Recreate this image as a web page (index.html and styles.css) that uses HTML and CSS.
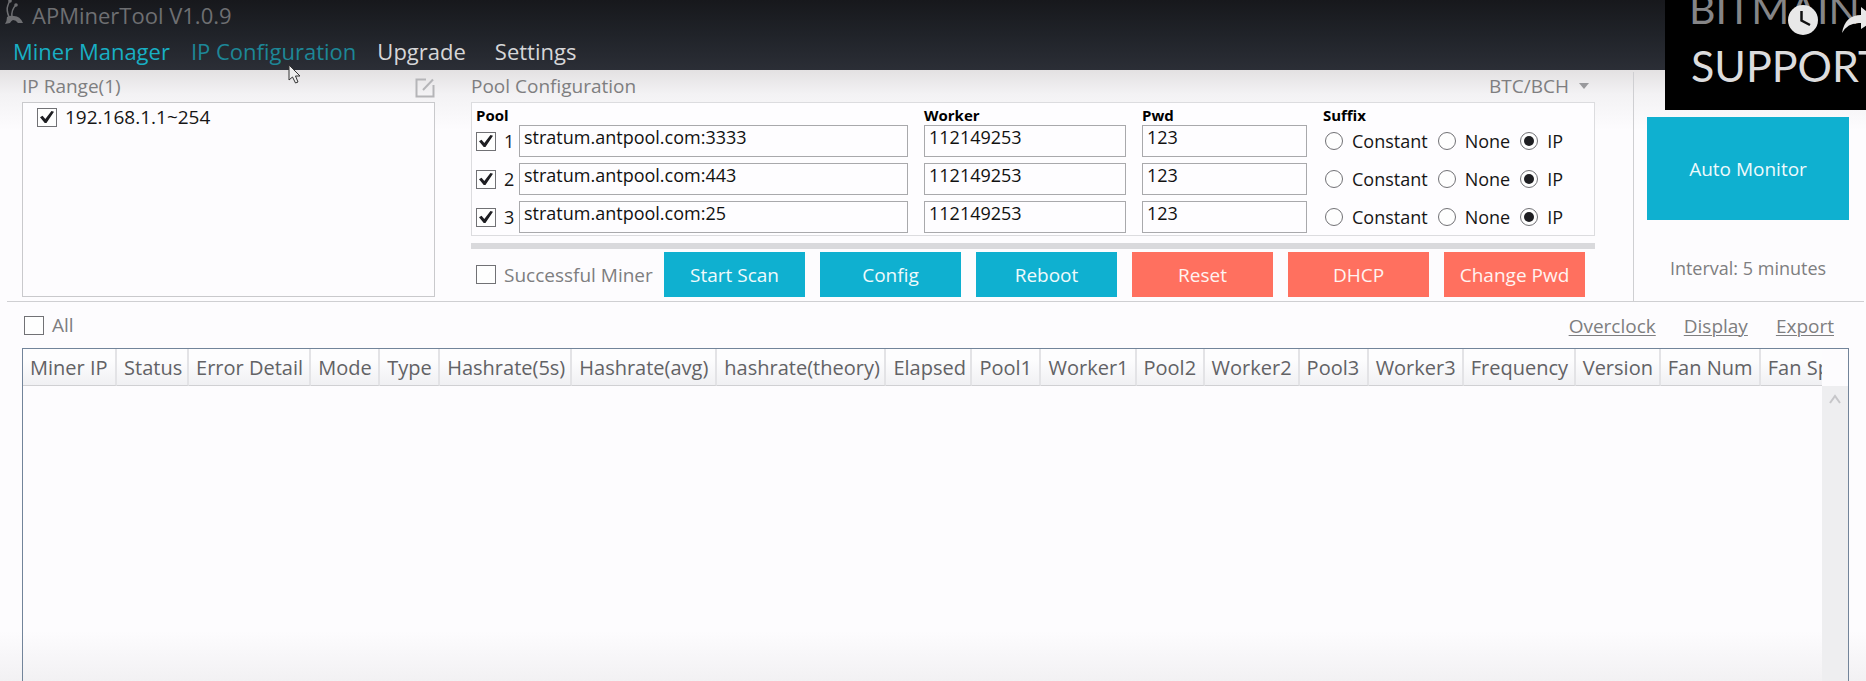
FILE: index.html
```html
<!DOCTYPE html>
<html lang="en">
<head>
<meta charset="utf-8">
<title>APMinerTool V1.0.9</title>
<link rel="stylesheet" href="styles.css">
</head>
<body>
<header class="topbar">
  <div class="brand">
    <svg class="brand-icon" viewBox="0 0 20 24" aria-hidden="true">
      <path d="M0 24Q2 21 2 17Q5 15 9 16Q15 16 18 23H13Q11 20 8 20Q6 21 5 23Z" fill="currentColor"/>
      <path d="M4 17Q1 10 3 5Q4 2 5 1M7 17Q6 10 11 5" fill="none" stroke="currentColor" stroke-width="1.500"/>
      <circle cx="5" cy="1" r="1.800" fill="currentColor"/><circle cx="11" cy="5" r="1.800" fill="currentColor"/>
    </svg>
    <h1 class="brand-name">APMinerTool V1.0.9</h1>
  </div>
  <nav class="nav">
    <a class="nav-link nav-active" href="#miner">Miner Manager</a>
    <a class="nav-link nav-hover" href="#ip">IP Configuration</a>
    <a class="nav-link nav-upgrade" href="#upgrade">Upgrade</a>
    <a class="nav-link" href="#settings">Settings</a>
  </nav>
</header>

<main class="main">
  <div class="config">
    <section class="ip-range">
      <div class="section-head">
        <h2 class="section-title">IP Range(1)</h2>
        <button class="icon-button" type="button" aria-label="Edit IP range">
          <svg width="20" height="20" viewBox="0 0 20 20" fill="none" stroke="#b5b5b8" stroke-width="2" aria-hidden="true">
            <path d="M11 1.500H1.500V18.500H18.500V7"/><path d="M8 12L18 1.500"/>
          </svg>
        </button>
      </div>
      <div class="ip-list">
        <label class="check-label ip-item"><input class="check" type="checkbox" checked> 192.168.1.1~254</label>
      </div>
    </section>

    <section class="pools">
      <div class="section-head">
        <h2 class="section-title">Pool Configuration</h2>
        <select class="coin" aria-label="Coin"><option>BTC/BCH</option></select>
      </div>
      <div class="pool-box">
        <div class="pool-row pool-head">
          <span>Pool</span><span></span><span>Worker</span><span>Pwd</span><span>Suffix</span>
        </div>
        <div class="pool-row">
          <label class="check-label"><input class="check" type="checkbox" checked> 1</label>
          <input class="field" type="text" aria-label="Pool 1 URL" value="stratum.antpool.com:3333">
          <input class="field" type="text" aria-label="Pool 1 worker" value="112149253">
          <input class="field" type="text" aria-label="Pool 1 password" value="123">
          <div class="suffix">
            <label class="radio-label"><input class="radio" type="radio" name="s1">Constant</label>
            <label class="radio-label"><input class="radio" type="radio" name="s1">None</label>
            <label class="radio-label"><input class="radio" type="radio" name="s1" checked>IP</label>
          </div>
        </div>
        <div class="pool-row">
          <label class="check-label"><input class="check" type="checkbox" checked> 2</label>
          <input class="field" type="text" aria-label="Pool 2 URL" value="stratum.antpool.com:443">
          <input class="field" type="text" aria-label="Pool 2 worker" value="112149253">
          <input class="field" type="text" aria-label="Pool 2 password" value="123">
          <div class="suffix">
            <label class="radio-label"><input class="radio" type="radio" name="s2">Constant</label>
            <label class="radio-label"><input class="radio" type="radio" name="s2">None</label>
            <label class="radio-label"><input class="radio" type="radio" name="s2" checked>IP</label>
          </div>
        </div>
        <div class="pool-row">
          <label class="check-label"><input class="check" type="checkbox" checked> 3</label>
          <input class="field" type="text" aria-label="Pool 3 URL" value="stratum.antpool.com:25">
          <input class="field" type="text" aria-label="Pool 3 worker" value="112149253">
          <input class="field" type="text" aria-label="Pool 3 password" value="123">
          <div class="suffix">
            <label class="radio-label"><input class="radio" type="radio" name="s3">Constant</label>
            <label class="radio-label"><input class="radio" type="radio" name="s3">None</label>
            <label class="radio-label"><input class="radio" type="radio" name="s3" checked>IP</label>
          </div>
        </div>
      </div>
      <div class="progress"></div>
      <div class="actions">
        <label class="check-label muted"><input class="check" type="checkbox"> Successful Miner</label>
        <div class="action-buttons">
          <button class="button" type="button">Start Scan</button>
          <button class="button" type="button">Config</button>
          <button class="button" type="button">Reboot</button>
          <button class="button button-danger" type="button">Reset</button>
          <button class="button button-danger" type="button">DHCP</button>
          <button class="button button-danger" type="button">Change Pwd</button>
        </div>
      </div>
    </section>

    <aside class="monitor">
      <button class="button button-monitor" type="button">Auto Monitor</button>
      <p class="interval">Interval: 5 minutes</p>
    </aside>
  </div>

  <div class="toolbar">
    <label class="check-label muted"><input class="check" type="checkbox"> All</label>
    <div class="links">
      <a class="link" href="#overclock">Overclock</a>
      <a class="link" href="#display">Display</a>
      <a class="link" href="#export">Export</a>
    </div>
  </div>

  <div class="grid">
    <div class="grid-view">
      <table class="miners">
        <colgroup>
          <col class="w94"><col class="w72"><col class="w122"><col class="w69"><col class="w60"><col class="w132"><col class="w145"><col class="w169"><col class="w86"><col class="w69"><col class="w95"><col class="w68"><col class="w95"><col class="w69"><col class="w95"><col class="w112"><col class="w85"><col class="w100"><col class="w122">
        </colgroup>
        <thead>
          <tr><th>Miner IP</th><th>Status</th><th>Error Detail</th><th>Mode</th><th>Type</th><th>Hashrate(5s)</th><th>Hashrate(avg)</th><th>hashrate(theory)</th><th>Elapsed</th><th>Pool1</th><th>Worker1</th><th>Pool2</th><th>Worker2</th><th>Pool3</th><th>Worker3</th><th>Frequency</th><th>Version</th><th>Fan Num</th><th>Fan Speed</th></tr>
        </thead>
      </table>
    </div>
    <div class="scrollbar">
      <svg width="14" height="10" viewBox="0 0 14 10" fill="none" stroke="#c6c6c9" stroke-width="2" aria-hidden="true"><path d="M2 9L7 2L12 9"/></svg>
    </div>
  </div>
</main>

<div class="watermark">
  <div class="wm-brand">BITMAIN</div>
  <div class="wm-support">SUPPORT</div>
  <svg class="wm-clock" viewBox="0 0 30 30" aria-hidden="true"><circle cx="15" cy="15" r="15" fill="#e8e8e8"/><path d="M13.500 6V15.500L22 20" fill="none" stroke="#111" stroke-width="2.500"/></svg>
  <svg class="wm-share" viewBox="0 0 34 26" aria-hidden="true"><path d="M0 26Q3 8 19 8V0L34 12L19 22V16Q6 15 0 26Z" fill="#e8e8e8"/></svg>
</div>
<svg class="cursor" viewBox="0 0 14 20" aria-hidden="true"><path d="M1 1V16L4.500 13L7.500 19L10 18L7.500 12H12Z" fill="#eee" stroke="#333" stroke-width="1"/></svg>
</body>
</html>
```
FILE: styles.css
```css
* { box-sizing: border-box; }
body {
  margin: 0;
  min-height: 100vh;
  display: flex;
  flex-direction: column;
  overflow: hidden;
  font: 18px/24px "Open Sans", "Noto Sans", sans-serif;
  color: #161616;
  background: #fdfcfe;
}
button, input, select { font: inherit; color: inherit; }

.topbar {
  height: 70px;
  padding-left: 5px;
  background: linear-gradient(#17181c, #202329 50%, #2b2e36);
}
.brand { display: flex; gap: 7px; height: 32px; color: #6e6f72; }
.brand-icon { width: 20px; height: 24px; }
.brand-name { margin: 0; font-size: 22px; line-height: 30px; font-weight: 400; }
.nav { display: flex; gap: 21px; padding-left: 8px; font-size: 22px; line-height: 38px; height: 38px; align-items: center; }
.nav-link { color: #d6d6d8; text-decoration: none; }
.nav-active { color: #18afc4; }
.nav-hover { color: #1d8797; }
.nav-upgrade { margin-right: 8px; }

.main {
  flex: 1;
  display: flex;
  flex-direction: column;
  background:
    linear-gradient(#e3e1e2, #f3f2f4 24px, #fdfcfe 60px, transparent 61px),
    linear-gradient(to top, #f2f1f3, #fdfcfe 50px);
}
.config {
  display: flex;
  margin: 0 2px 0 7px;
  padding-left: 15px;
  border-bottom: 1px solid #cfcfd2;
}
.section-head { display: flex; justify-content: space-between; align-items: center; height: 32px; }
.section-title { margin: 0; font-size: 19px; font-weight: 400; color: #7e7e80; }

.ip-range { width: 413px; display: flex; flex-direction: column; padding-bottom: 4px; }
.icon-button { border: 0; padding: 0; margin-top: 4px; background: none; height: 20px; width: 20px; line-height: 20px; }
.icon-button svg { display: block; }
.ip-list { flex: 1; border: 1px solid #c9c9cc; background: #fdfcfe; }
.ip-item { padding: 2px 0 0 14px; }

.check-label { display: flex; align-items: center; gap: 8px; white-space: nowrap; }
.check, .radio { appearance: none; margin: 0; flex: none; border: 1px solid #717175; background: #fefefe; }
.check { width: 20px; height: 19px; display: grid; place-items: center; }
.check:checked::before {
  content: "";
  width: 14px;
  height: 12px;
  background: #1e1e22;
  clip-path: polygon(0 52%, 18% 40%, 38% 66%, 82% 0, 100% 6%, 46% 100%, 34% 100%);
}
.radio { width: 18px; height: 18px; border-radius: 50%; display: grid; place-items: center; }
.radio:checked::before { content: ""; width: 10px; height: 10px; border-radius: 50%; background: #1e1e22; }
.ip-item { font-size: 19px; }
.muted { font-size: 19px; color: #7e7e80; }

.pools { flex: 1; margin-left: 36px; }
.coin {
  appearance: none;
  border: 0;
  padding: 0 26px 0 0;
  font-size: 19px;
  color: #7e7e80;
  background: url("data:image/svg+xml,%3Csvg xmlns='http://www.w3.org/2000/svg' width='10' height='6'%3E%3Cpath d='M0 0h10L5 6z' fill='%2399999c'/%3E%3C/svg%3E") no-repeat right 6px center;
}
.pool-box { border: 1px solid #dcdcdf; padding: 3px 20px 2px 4px; display: flex; flex-direction: column; gap: 6px; background: #fefdff; }
.pool-row {
  display: grid;
  grid-template-columns: 43px minmax(0, 389fr) minmax(0, 218fr) minmax(0, 181fr) 267px;
  align-items: center;
}
.pool-head { font-size: 15px; line-height: 18px; font-weight: 700; color: #000; margin-bottom: -5px; }
.field { width: 100%; height: 32px; border: 1px solid #a9a9ac; padding: 0 4px 8px; background: #fefdff; color: #111; }
.pool-row > :nth-child(n + 3) { margin-left: 16px; width: auto; min-width: 0; }
.suffix { display: flex; gap: 10px; padding-left: 2px; }
.radio-label { display: flex; align-items: center; gap: 9px; }
.progress { height: 6px; margin-top: 7px; background: #d9d9dc; }
.actions { display: flex; justify-content: space-between; padding: 3px 10px 4px 5px; }
.action-buttons { display: grid; grid-template-columns: repeat(6, 141px); gap: 15px; }
.button { height: 45px; border: 0; padding: 0; font-size: 19px; background: #0fb0d0; color: #eefafc; }
.button-danger { background: #ff705f; color: #fff3f1; }

.monitor { margin: 2px 0 0 38px; width: 231px; padding: 45px 15px 0 13px; border-left: 1px solid #cfcfd2; }
.button-monitor { width: 100%; height: 103px; }
.interval { margin: 36px 0 0; text-align: center; color: #7e7e80; }

.toolbar { display: flex; justify-content: space-between; align-items: center; height: 46px; padding: 0 32px 0 24px; }
.links { display: flex; gap: 28px; padding-top: 2px; font-size: 19px; }
.link { color: #7e7e80; text-underline-offset: 2px; text-decoration-thickness: 1px; }

.grid { flex: 1; display: flex; margin: 0 17px 0 22px; border: 1px solid #72849a; border-bottom: 0; }
.grid-view { flex: 1; min-width: 0; overflow: hidden; }
.miners { table-layout: fixed; width: 1860px; border-collapse: separate; border-spacing: 0; }
.miners th {
  height: 37px;
  padding: 1px 0 0 7px;
  text-align: left;
  white-space: nowrap;
  font-size: 20px;
  font-weight: 400;
  color: #626265;
  background: linear-gradient(#fdfdfe 30%, #f0f0f3);
  border-right: 2px solid #e3e3e6;
  border-bottom: 1px solid #d0d0d3;
}
.w60 { width: 60px; } .w68 { width: 68px; } .w69 { width: 69px; } .w72 { width: 72px; }
.w85 { width: 85px; } .w86 { width: 86px; } .w94 { width: 94px; } .w95 { width: 95px; }
.w100 { width: 100px; } .w112 { width: 112px; } .w122 { width: 122px; } .w132 { width: 132px; }
.w145 { width: 145px; } .w169 { width: 169px; }
.scrollbar { width: 26px; margin-top: 37px; padding-top: 6px; text-align: center; line-height: 10px; background: #eeeef0; }

.watermark { position: absolute; top: 0; right: 0; width: 201px; height: 110px; overflow: hidden; background: #000; white-space: nowrap; font-family: Lato, sans-serif; }
.wm-brand { position: absolute; left: 24px; bottom: 76px; font-size: 41px; line-height: 50px; color: #858587; }
.wm-support { position: absolute; left: 26px; top: 41px; font-size: 43px; line-height: 50px; color: #dcdcdd; }
.wm-clock { position: absolute; left: 123px; top: 5px; width: 30px; height: 30px; }
.wm-share { position: absolute; left: 177px; top: 7px; width: 34px; height: 26px; }
.cursor { position: absolute; left: 288px; top: 64px; width: 14px; height: 20px; }
```
